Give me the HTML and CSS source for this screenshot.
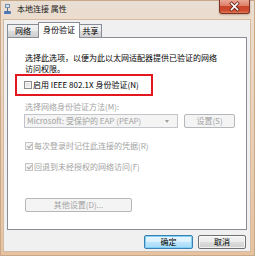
FILE: index.html
```html
<!DOCTYPE html>
<html lang="zh-CN">
<head>
<meta charset="utf-8">
<title>本地连接 属性</title>
<link rel="stylesheet" href="styles.css">
</head>
<body>
<div class="window">
  <div class="titlebar">
    <svg class="ticon" width="7" height="10" viewBox="0 0 7 10">
      <rect x="1" y="0" width="5" height="4" fill="#7a8fa8"/>
      <rect x="2" y="1" width="3" height="2" fill="#c9dff2"/>
      <rect x="3" y="4" width="1" height="3" fill="#5a6f88"/>
      <rect x="0" y="7" width="7" height="3" rx="1" fill="#4f77b3"/>
    </svg>
    <span class="title">本地连接 属性</span>
    <div class="close">
      <svg width="31" height="14" viewBox="0 0 31 14">
        <path d="M12.5 3.5 L18.5 9.5 M18.5 3.5 L12.5 9.5" stroke="#6b2a1e" stroke-width="3.2" stroke-linecap="square"/>
        <path d="M12.5 3.5 L18.5 9.5 M18.5 3.5 L12.5 9.5" stroke="#ffffff" stroke-width="1.6" stroke-linecap="square"/>
      </svg>
    </div>
  </div>
  <div class="client">
    <div class="tabs">
      <div class="tab t1">网络</div>
      <div class="tab t2 sel">身份验证</div>
      <div class="tab t3">共享</div>
    </div>
    <div class="panel">
      <p class="desc">选择此选项，以便为此以太网适配器提供已验证的网络<br>访问权限。</p>
      <div class="hl">
        <div class="chk"><span class="box"></span><span>启用 IEEE 802.1X 身份验证(N)</span></div>
      </div>
      <div class="lbl dis">选择网络身份验证方法(M):</div>
      <div class="row">
        <div class="combo dis"><span class="ctext">Microsoft: 受保护的 EAP (PEAP)</span><span class="arrow"></span></div>
        <div class="btn dis set">设置(S)</div>
      </div>
      <div class="chk dis c2"><span class="box on"></span><span>每次登录时记住此连接的凭据(R)</span></div>
      <div class="chk dis c3"><span class="box on"></span><span>回退到未经授权的网络访问(F)</span></div>
      <div class="btn dis other">其他设置(D)...</div>
    </div>
    <div class="actions">
      <div class="btn def">确定</div>
      <div class="btn">取消</div>
    </div>
  </div>
</div>
</body>
</html>
```
FILE: styles.css
```css
* { box-sizing: border-box; margin: 0; padding: 0; }
html, body { width: 255px; height: 256px; overflow: hidden; }
body {
  font-family: "Noto Sans CJK SC", "Noto Sans", sans-serif;
  font-size: 8px;
  color: #000;
  background: #e7c6a6;
}
.window {
  width: 255px;
  height: 256px;
  display: flex;
  flex-direction: column;
  padding: 0 5px 5px 4px;
  background: linear-gradient(#e8dfd6 0, #ecdccb 8%, #ecd3bb 40%, #e6c2a0 100%);
  box-shadow: inset 0 0 0 1px #c9a887;
}
.titlebar {
  height: 20px;
  flex: none;
  display: flex;
  align-items: center;
  padding-bottom: 2px;
}
.ticon { flex: none; display: block; }
.title { margin-left: 6px; line-height: 10px; color: #1a1a1a; white-space: nowrap; }
.close {
  margin-left: auto;
  align-self: flex-start;
  width: 31px;
  height: 14px;
  border: 1px solid #7a3326;
  border-top: none;
  border-radius: 0 0 3px 3px;
  background: linear-gradient(#eaa795 0, #dd7d66 45%, #c9452c 50%, #cf4a2e 80%, #e07a55 100%);
  box-shadow: 0 1px 2px rgba(120,60,40,.35);
  position: relative;
}
.close svg { position: absolute; left: -1px; top: 0; display: block; }
.client {
  flex: 1;
  background: #f0f0f0;
  padding: 2px 4px 0 3px;
  display: flex;
  flex-direction: column;
  box-shadow: 0 0 0 1px #d3bba3;
}
.tabs {
  height: 15px;
  display: flex;
  align-items: flex-end;
  position: relative;
  z-index: 1;
}
.tab {
  height: 13px;
  border: 1px solid #898c95;
  border-bottom: none;
  background: linear-gradient(#f3f3f3, #ebebeb 50%, #dddddd 50%, #cfcfcf);
  text-align: center;
  line-height: 12px;
  white-space: nowrap;
}
.t1 { width: 31px; border-right: none; }
.t2 { width: 42px; }
.t3 { width: 22px; border-left: none; }
.tab.sel {
  height: 16px;
  margin-bottom: -1px;
  background: #fff;
  line-height: 14px;
}
.panel {
  width: 240px;
  height: 193px;
  flex: none;
  border: 1px solid #898c95;
  background: #fff;
  padding: 14px 0 0 17px;
  display: flex;
  flex-direction: column;
  align-items: flex-start;
}
.desc { line-height: 11px; white-space: nowrap; }
.hl {
  margin: 0 0 0 -10px;
  width: 138px;
  height: 22px;
  border: 2px solid #e3171f;
  display: flex;
  align-items: center;
  padding-left: 7px;
}
.chk {
  display: flex;
  align-items: center;
  height: 10px;
  line-height: 10px;
  white-space: nowrap;
}
.box {
  width: 8px;
  height: 8px;
  margin-right: 1px;
  flex: none;
  border: 1px solid #8f8f8f;
  background: linear-gradient(135deg, #d6d6d6, #f8f8f8);
  box-shadow: inset 0 0 0 1px #f4f4f4;
  position: relative;
}
.dis { color: #a3a3a3; }
.dis .box { border-color: #c5c5c5; background: #f4f4f4; box-shadow: none; }
.box.on::after {
  content: "";
  position: absolute;
  left: 2px;
  top: 0;
  width: 2px;
  height: 4px;
  border: solid #a8a8a8;
  border-width: 0 1px 1px 0;
  transform: rotate(40deg);
}
.lbl { margin-top: 6px; line-height: 10px; white-space: nowrap; }
.row { margin-top: 2px; height: 14px; display: flex; }
.combo {
  margin-left: -1px;
  width: 154px;
  height: 14px;
  border: 1px solid #c2c5c9;
  background: #f4f4f4;
  display: flex;
  align-items: center;
  padding-left: 2px;
  line-height: 10px;
  white-space: nowrap;
}
.ctext { flex: 1; }
.arrow {
  width: 0;
  height: 0;
  margin-right: 8px;
  border-left: 2.5px solid transparent;
  border-right: 2.5px solid transparent;
  border-top: 3px solid #a0a0a0;
}
.btn {
  height: 14px;
  border: 1px solid #707070;
  border-radius: 2px;
  background: linear-gradient(#f2f2f2, #ebebeb 50%, #dddddd 50%, #cfcfcf);
  box-shadow: inset 0 0 0 1px rgba(255,255,255,.7);
  display: flex;
  align-items: center;
  justify-content: center;
  line-height: 10px;
  white-space: nowrap;
}
.btn.dis {
  border-color: #b5b8bb;
  background: #f4f4f4;
  box-shadow: none;
}
.set { margin-left: 6px; width: 51px; }
.c2 { margin-top: 13px; }
.c3 { margin-top: 11px; }
.other { margin-top: 26px; width: 107px; }
.actions {
  margin-top: 5px;
  display: flex;
  justify-content: flex-end;
  gap: 5px;
}
.actions .btn { width: 48px; }
.btn.def {
  width: 49px;
  border-color: #3c7fb1;
  background: linear-gradient(#eaf6fd, #d9f0fc 50%, #bee6fd 50%, #a7d9f5);
  box-shadow: inset 0 0 0 1px #7fd1f7;
}
```
